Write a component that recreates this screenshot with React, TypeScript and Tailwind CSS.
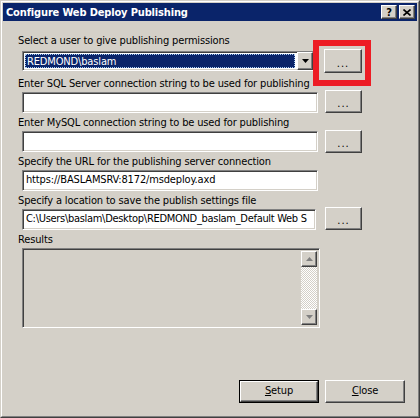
const font = { fontFamily: '"DejaVu Sans Condensed", "Liberation Sans", Arial, sans-serif' };

const sunken =
  "border border-t-[#808080] border-l-[#808080] border-b-white border-r-white shadow-[inset_1px_1px_0_#404040,inset_-1px_-1px_0_#d4d0c8]";
const raised =
  "border border-t-white border-l-white border-b-[#404040] border-r-[#404040] shadow-[inset_-1px_-1px_0_#808080]";

function DotsButton({ className = "" }: { className?: string }) {
  return (
    <button
      className={`${raised} bg-[#d4d0c8] h-[23px] flex items-center justify-center text-[11px] text-black leading-none ${className}`}
    >
      <span className="mt-[4px] tracking-[1px]">...</span>
    </button>
  );
}

function TextBox({ value = "", className = "" }: { value?: string; className?: string }) {
  return (
    <div
      className={`${sunken} bg-white h-[21px] flex items-center px-[3px] overflow-hidden text-[11px] text-black ${className}`}
    >
      <span className="block w-full overflow-hidden whitespace-nowrap">{value}</span>
    </div>
  );
}

function Label({ children, className = "" }: { children: React.ReactNode; className?: string }) {
  return <div className={`text-[11px] leading-[13px] text-black whitespace-nowrap ${className}`}>{children}</div>;
}

function Tri({ up }: { up?: boolean }) {
  return (
    <svg width="7" height="4" viewBox="0 0 7 4">
      <path d={up ? "M3.5 0 L7 4 L0 4 Z" : "M0 0 L7 0 L3.5 4 Z"} fill="#808080" />
    </svg>
  );
}

export default function App() {
  return (
    <div className="w-[420px] h-[418px] bg-[#d4d0c8] overflow-hidden tracking-[-0.15px]" style={font}>
      <div className="w-full h-full border border-t-[#d4d0c8] border-l-[#d4d0c8] border-b-[#404040] border-r-[#404040]">
        <div className="w-full h-full border border-t-white border-l-white border-b-[#808080] border-r-[#808080] p-px flex flex-col relative">
          {/* title bar */}
          <div className="h-[18px] bg-[#0a246a] flex items-center pl-[3px] pr-[2px]">
            <span className="text-white font-bold text-[11px] leading-none">Configure Web Deploy Publishing</span>
            <div className="ml-auto flex gap-[2px]">
              <div className={`${raised} bg-[#d4d0c8] w-[16px] h-[14px] flex items-center justify-center text-[11px] font-bold leading-none text-black`}>
                ?
              </div>
              <div className={`${raised} bg-[#d4d0c8] w-[16px] h-[14px] flex items-center justify-center`}>
                <svg width="8" height="7" viewBox="0 0 8 7">
                  <path d="M0.5 0.5 L7.5 6.5 M7.5 0.5 L0.5 6.5" stroke="#000" strokeWidth="1.6" />
                </svg>
              </div>
            </div>
          </div>

          {/* body */}
          <div className="flex flex-col pl-[15px]">
            <Label className="mt-[13px]">Select a user to give publishing permissions</Label>

            <div className="flex items-start mt-[2px]">
              <div className={`${sunken} ml-[4px] mt-[2px] w-[292px] h-[20px] bg-white flex items-stretch`}>
                <div className="flex-1 m-[2px] bg-[#0a246a] text-white text-[11px] leading-[14px] px-[1px] border border-dotted border-[#a6caf0]">
                  REDMOND\baslam
                </div>
                <div className={`${raised} bg-[#d4d0c8] w-[16px] flex items-center justify-center`}>
                  <svg width="7" height="4" viewBox="0 0 7 4">
                    <path d="M0 0 L7 0 L3.5 4 Z" fill="#000" />
                  </svg>
                </div>
              </div>
              <DotsButton className="ml-[10px] w-[38px] h-[24px]" />
            </div>

            <Label className="mt-[4px]">Enter SQL Server connection string to be used for publishing</Label>
            <div className="flex items-start">
              <TextBox className="ml-[4px] mt-[2px] w-[296px]" />
              <DotsButton className="ml-[7px] w-[37px]" />
            </div>

            <Label className="mt-[3px]">Enter MySQL connection string to be used for publishing</Label>
            <div className="flex items-start mt-px">
              <TextBox className="ml-[4px] mt-px w-[296px]" />
              <DotsButton className="ml-[7px] w-[37px]" />
            </div>

            <Label className="mt-[2px]">Specify the URL for the publishing server connection</Label>
            <TextBox className="ml-[4px] mt-[2px] w-[296px]" value="https://BASLAMSRV:8172/msdeploy.axd" />

            <Label className="mt-[3px]">Specify a location to save the publish settings file</Label>
            <div className="flex items-start">
              <TextBox
                className="ml-[4px] mt-[2px] w-[294px] px-[2px] tracking-[-0.3px]"
                value="C:\Users\baslam\Desktop\REDMOND_baslam_Default Web S"
              />
              <DotsButton className="ml-[9px] w-[37px]" />
            </div>

            <Label className="mt-[3px]">Results</Label>
            <div className={`${sunken} ml-[4px] mt-[2px] w-[298px] h-[80px] bg-[#d4d0c8] flex justify-end p-[2px]`}>
              <div className="w-[16px] flex flex-col">
                <div className={`${raised} bg-[#d4d0c8] h-[16px] flex items-center justify-center`}>
                  <Tri up />
                </div>
                <div className="flex-1 bg-[repeating-conic-gradient(#ffffff_0%_25%,#d4d0c8_0%_50%)] bg-size-[2px_2px]" />
                <div className={`${raised} bg-[#d4d0c8] h-[16px] flex items-center justify-center`}>
                  <Tri />
                </div>
              </div>
            </div>

            <div className="flex mt-[52px] pl-[221px] gap-[6px]">
              <button className="w-[80px] h-[23px] border border-black bg-[#d4d0c8]">
                <div className={`${raised} w-full h-full flex items-center justify-center text-[11px] text-black`}>
                  <span><span className="underline">S</span>etup</span>
                </div>
              </button>
              <button className={`${raised} w-[80px] h-[23px] bg-[#d4d0c8] flex items-center justify-center text-[11px] text-black`}>
                <span><span className="underline">C</span>lose</span>
              </button>
            </div>
          </div>

          {/* red highlight annotation */}
          <div className="absolute left-[311px] top-[38px] w-[58px] h-[46px] border-[6px] border-[#ed1c24] pointer-events-none" />
        </div>
      </div>
    </div>
  );
}
